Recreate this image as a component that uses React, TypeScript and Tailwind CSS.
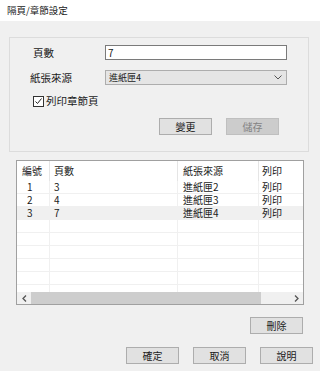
const font = { fontFamily: '"Noto Sans CJK TC", "Noto Sans CJK JP", sans-serif' };

const rows = [
  { no: "1", pages: "3", src: "進紙匣2", print: "列印" },
  { no: "2", pages: "4", src: "進紙匣3", print: "列印" },
  { no: "3", pages: "7", src: "進紙匣4", print: "列印" },
];

function Btn({ label, disabled }: { label: string; disabled?: boolean }) {
  return (
    <div
      className={
        "w-[53px] h-[17px] flex items-center justify-center border text-[10px] leading-none " +
        (disabled
          ? "bg-[#cccccc] border-[#bfbfbf] text-[#838383]"
          : "bg-[#e1e1e1] border-[#adadad] text-[#1a1a1a]")
      }
    >
      {label}
    </div>
  );
}

function Row({ no, pages, src, print, hl }: { no: string; pages: string; src: string; print: string; hl?: boolean }) {
  return (
    <div className={"flex h-[13px] items-center text-[10px] leading-none border-b border-[#f0f0f0] " + (hl ? "bg-[#f0f0f0]" : "")}>
      <div className="w-[33px] h-full flex items-center pl-[10px] border-r border-[#f0f0f0]">{no}</div>
      <div className="w-[128px] h-full flex items-center pl-[4px] border-r border-[#f0f0f0]">{pages}</div>
      <div className="w-[81px] h-full flex items-center pl-[5px] border-r border-[#f0f0f0]">{src}</div>
      <div className="flex-1 h-full flex items-center pl-[3px]">{print}</div>
    </div>
  );
}

export default function App() {
  return (
    <div className="w-[320px] h-[371px] bg-[#f0f0f0] flex flex-col text-[#1a1a1a]" style={font}>
      {/* title */}
      <div className="h-[21px] bg-white flex items-center pl-[7px] text-[9.5px]">隔頁/章節設定</div>

      {/* group box */}
      <div className="mt-[16px] ml-[9px] w-[300px] h-[115px] border border-[#dcdcdc] flex flex-col">
        <div className="mt-[7px] flex items-center h-[15px]">
          <span className="ml-[23px] w-[72px] text-[10.5px]">頁數</span>
          <div className="w-[182px] h-[15px] bg-white border border-[#7a7a7a] flex items-center pl-[2px] text-[10px]">7</div>
        </div>
        <div className="mt-[10px] flex items-center h-[15px]">
          <span className="ml-[20px] w-[75px] text-[10.5px]">紙張來源</span>
          <div className="w-[182px] h-[15px] bg-[#e5e5e5] border border-[#adadad] flex items-center justify-between pl-[3px] pr-[4px] text-[9px]">
            <span>進紙匣4</span>
            <svg width="8" height="5" viewBox="0 0 8 5">
              <path d="M0.5 0.5 L4 4 L7.5 0.5" fill="none" stroke="#555" strokeWidth="1" />
            </svg>
          </div>
        </div>
        <div className="mt-[10px] flex items-center h-[12px] ml-[23px]">
          <div className="w-[11px] h-[11px] border border-[#333] bg-white flex items-center justify-center">
            <svg width="9" height="9" viewBox="0 0 9 9">
              <path d="M1.5 4.5 L3.5 6.5 L7.5 1.5" fill="none" stroke="#222" strokeWidth="1" />
            </svg>
          </div>
          <span className="ml-[2px] text-[10.5px]">列印章節頁</span>
        </div>
        <div className="mt-[11px] flex gap-[14px] ml-[149px]">
          <Btn label="變更" />
          <Btn label="儲存" disabled />
        </div>
      </div>

      {/* list */}
      <div className="mt-[8px] ml-[16px] w-[288px] h-[145px] border border-[#a0a0a0] bg-white flex flex-col overflow-hidden">
        <div className="flex h-[20px] items-center text-[10px] leading-none">
          <div className="w-[33px] h-full flex items-center pl-[5px] border-r border-[#e5e5e5]">編號</div>
          <div className="w-[128px] h-full flex items-center pl-[4px] border-r border-[#e5e5e5]">頁數</div>
          <div className="w-[81px] h-full flex items-center pl-[5px] border-r border-[#e5e5e5]">紙張來源</div>
          <div className="flex-1 h-full flex items-center pl-[3px]">列印</div>
        </div>
        <div className="flex-1 overflow-hidden">
          {rows.map((r, i) => (
            <Row key={r.no} {...r} hl={i === 2} />
          ))}
          {[0, 1, 2, 3, 4, 5].map((i) => (
            <Row key={"e" + i} no="" pages="" src="" print="" />
          ))}
        </div>
        <div className="h-[12px] flex items-center bg-[#f0f0f0]">
          <div className="w-[14px] h-full flex items-center justify-center">
            <svg width="5" height="7" viewBox="0 0 5 7">
              <path d="M4 0.5 L1 3.5 L4 6.5" fill="none" stroke="#555" strokeWidth="1.3" />
            </svg>
          </div>
          <div className="w-[230px] h-full bg-[#cdcdcd]" />
          <div className="flex-1" />
          <div className="w-[14px] h-full flex items-center justify-center">
            <svg width="5" height="7" viewBox="0 0 5 7">
              <path d="M1 0.5 L4 3.5 L1 6.5" fill="none" stroke="#555" strokeWidth="1.3" />
            </svg>
          </div>
        </div>
      </div>

      <div className="mt-[12px] ml-[250px]">
        <Btn label="刪除" />
      </div>

      <div className="mt-[13px] ml-[126px] flex gap-[14px]">
        <Btn label="確定" />
        <Btn label="取消" />
        <Btn label="說明" />
      </div>
    </div>
  );
}
